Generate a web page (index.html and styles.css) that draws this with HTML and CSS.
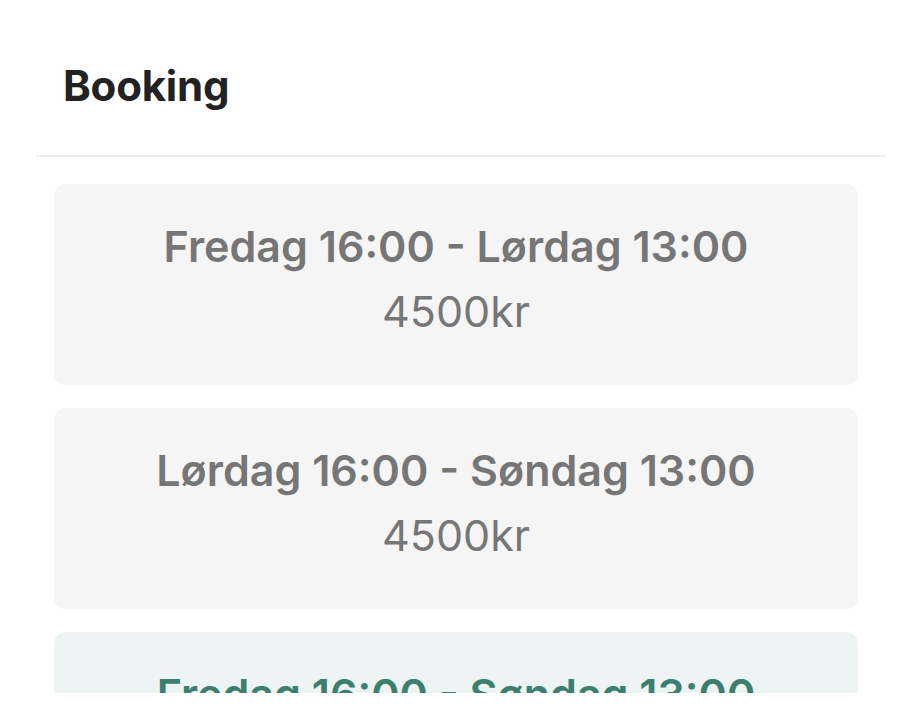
FILE: index.html
```html
<!DOCTYPE html>
<html lang="no">
<head>
<meta charset="utf-8">
<title>Booking</title>
<link rel="stylesheet" href="styles.css">
</head>
<body>
<div class="screen">
  <header class="header">
    <h1 class="title">Booking</h1>
  </header>
  <div class="list">
    <div class="slot">
      <div class="slot-time">Fredag 16:00 - Lørdag 13:00</div>
      <div class="slot-price">4500kr</div>
    </div>
    <div class="slot">
      <div class="slot-time">Lørdag 16:00 - Søndag 13:00</div>
      <div class="slot-price">4500kr</div>
    </div>
    <div class="slot slot-selected">
      <div class="slot-time">Fredag 16:00 - Søndag 13:00</div>
      <div class="slot-price">8000kr</div>
    </div>
  </div>
</div>
</body>
</html>
```
FILE: styles.css
```css
* { box-sizing: border-box; }
html, body { margin: 0; padding: 0; background: #fff; }
body { font-family: Inter, "Noto Sans", sans-serif; color: #222; }

.screen {
  height: 693px;
  display: flex;
  flex-direction: column;
  overflow: hidden;
}

.header {
  margin: 0 21px 0 36px;
  height: 157px;
  border-bottom: 2px solid #ececec;
  padding: 58px 0 0 27px;
  flex: none;
}
.title {
  margin: 0;
  font-size: 42px;
  line-height: 56px;
  font-weight: 700;
  color: #222;
  letter-spacing: -0.2px;
}

.list {
  flex: 1;
  overflow: hidden;
  padding: 27px 48px 0 54px;
  display: flex;
  flex-direction: column;
  gap: 23px;
}

.slot {
  flex: none;
  background: #f5f5f5;
  border-radius: 12px;
  height: 201px;
  padding-top: 30px;
  text-align: center;
  color: #767676;
}
.slot-time {
  font-size: 43px;
  line-height: 65px;
  font-weight: 600;
}
.slot-price {
  font-size: 43px;
  line-height: 65px;
  font-weight: 400;
}
.slot-selected {
  background: #eef3f3;
  color: #3d7f6e;
}
```
